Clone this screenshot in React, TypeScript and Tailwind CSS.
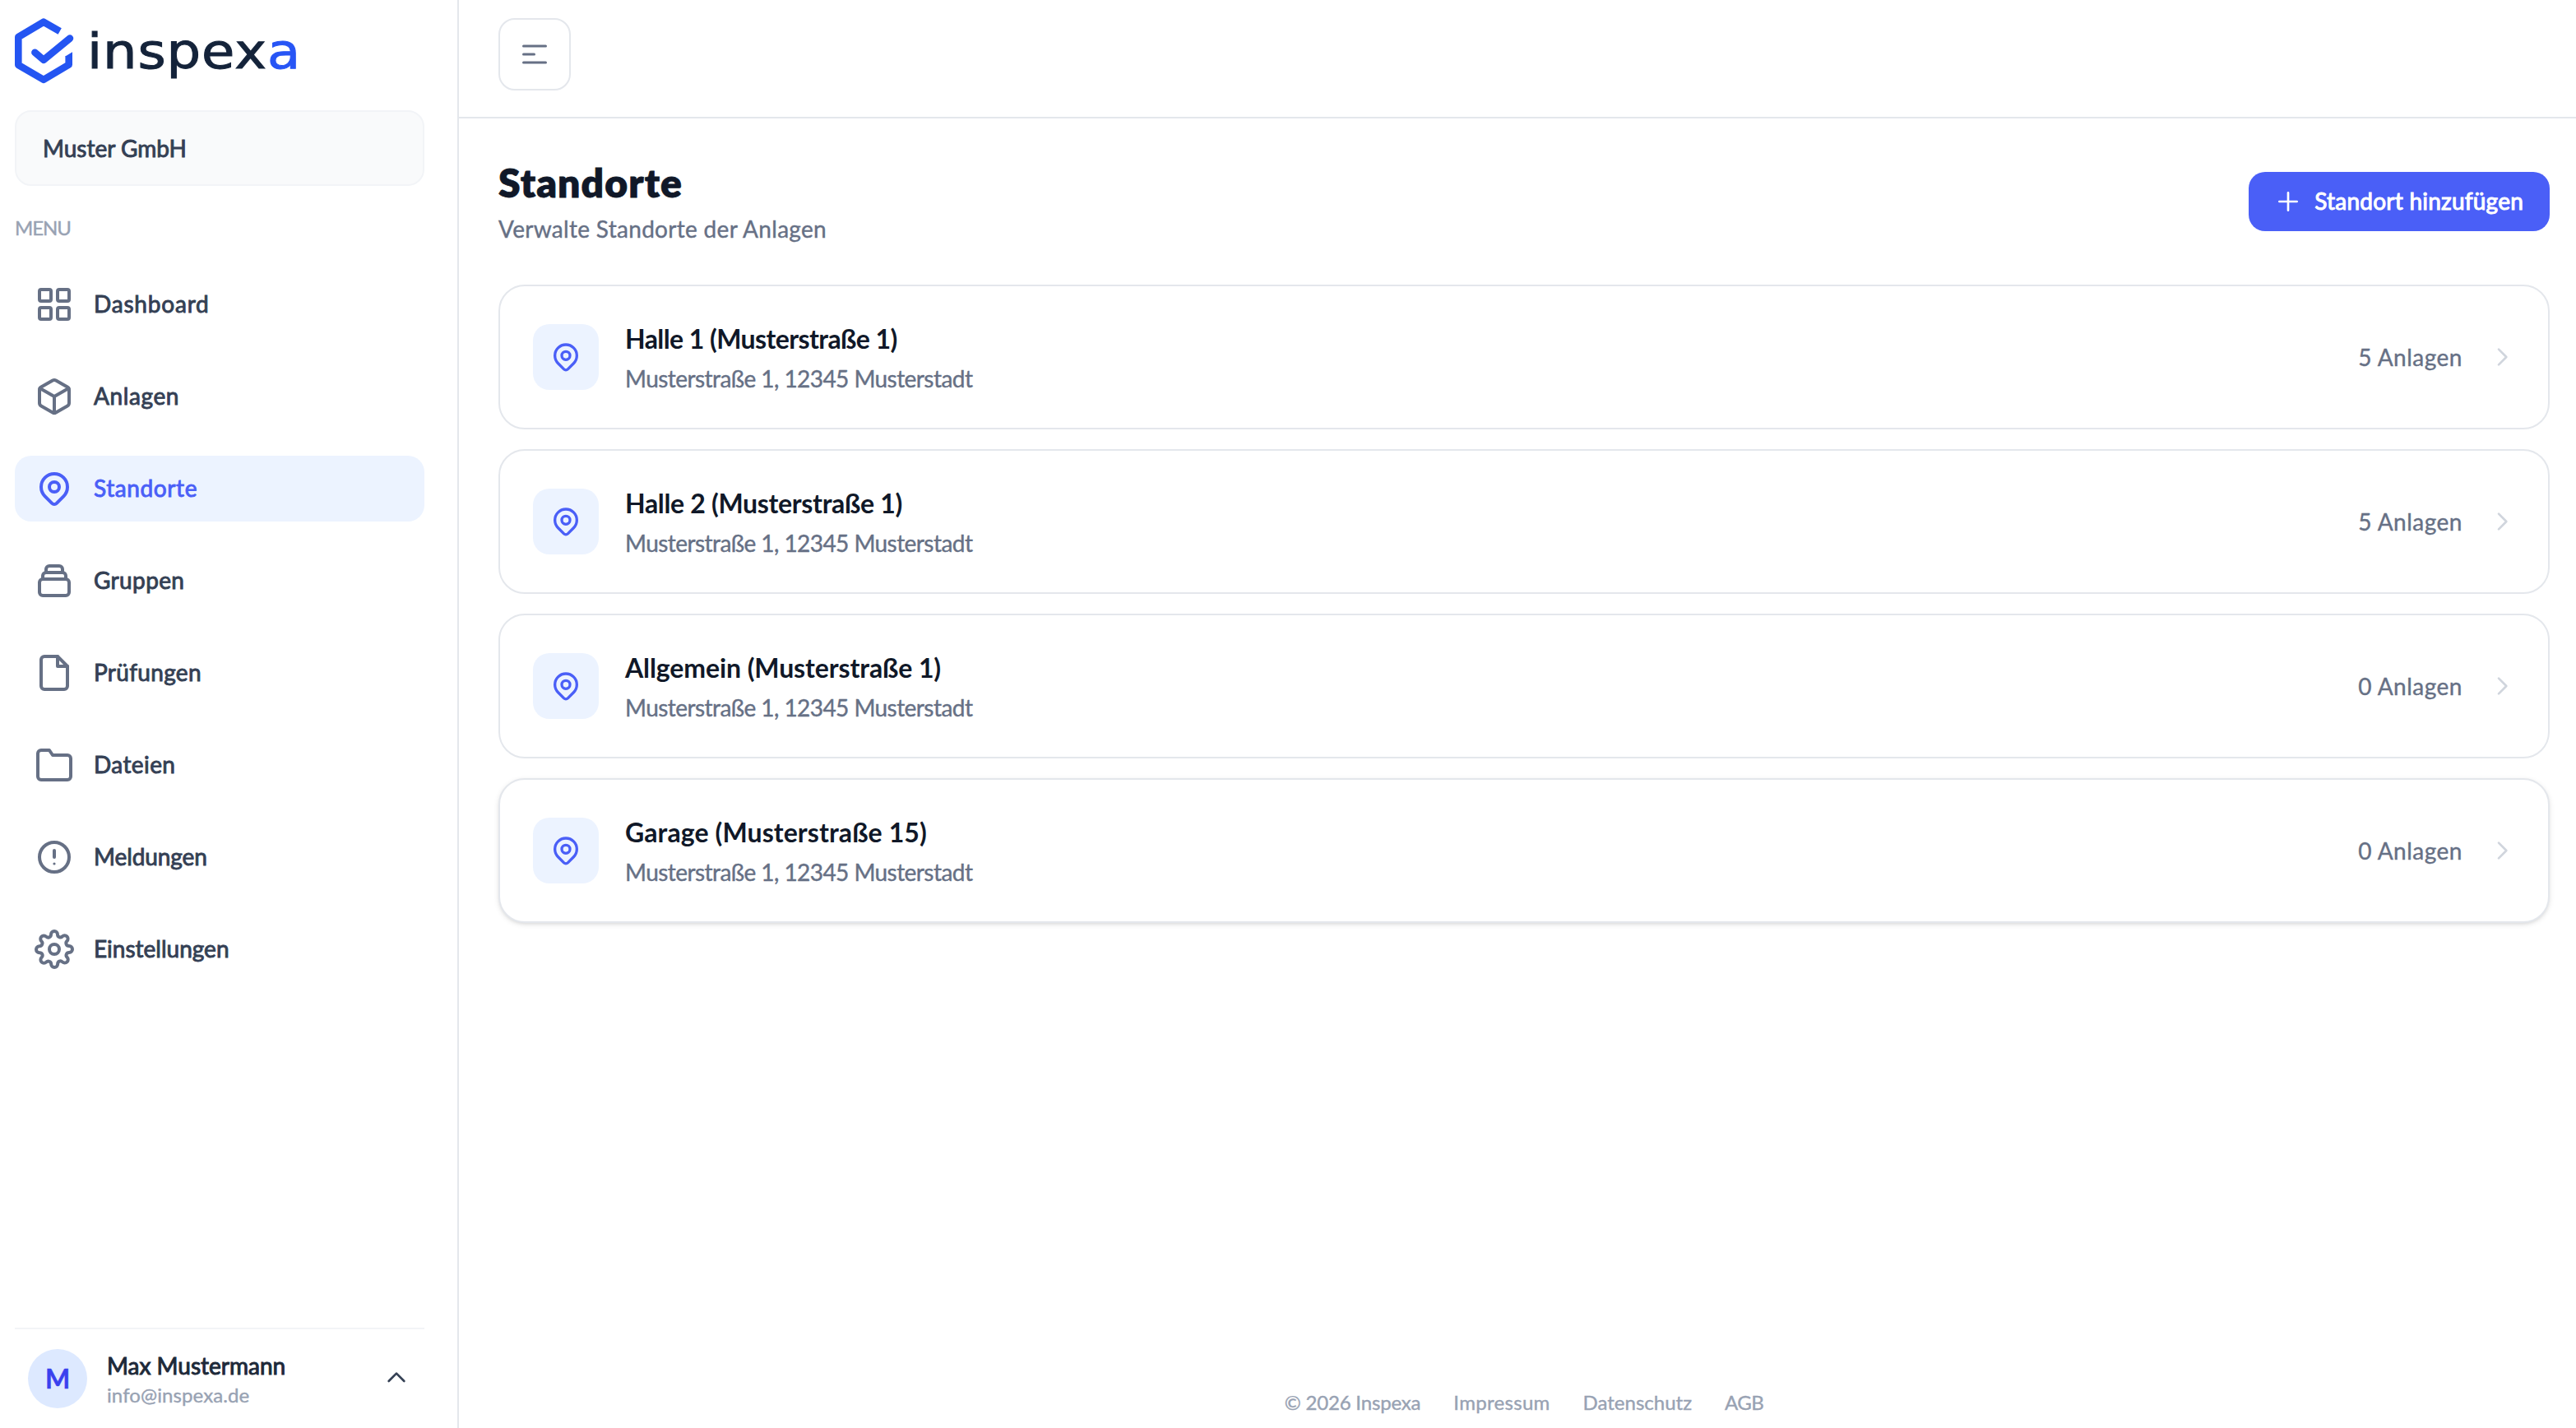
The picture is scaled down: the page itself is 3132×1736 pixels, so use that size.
import { ReactNode } from "react";
import { clsx } from "clsx";
import { FiBox, FiFolder, FiSettings } from "react-icons/fi";

const Icon = ({
  children,
  className,
}: {
  children: ReactNode;
  className?: string;
}) => (
  <svg
    viewBox="0 0 24 24"
    fill="none"
    stroke="currentColor"
    strokeWidth={2}
    strokeLinecap="round"
    strokeLinejoin="round"
    className={clsx("shrink-0", className)}
  >
    {children}
  </svg>
);

const GridIcon = () => (
  <Icon className="size-12">
    <rect x="3" y="3" width="7" height="7" rx="1" />
    <rect x="14" y="3" width="7" height="7" rx="1" />
    <rect x="14" y="14" width="7" height="7" rx="1" />
    <rect x="3" y="14" width="7" height="7" rx="1" />
  </Icon>
);

const PinIcon = ({ className }: { className: string }) => (
  <Icon className={className}>
    <path d="M17.657 16.657L13.414 20.9a1.998 1.998 0 01-2.827 0l-4.244-4.243a8 8 0 1111.314 0z" />
    <path d="M15 11a3 3 0 11-6 0 3 3 0 016 0z" />
  </Icon>
);

const CollectionIcon = () => (
  <Icon className="size-12">
    <path d="M19 11H5m14 0a2 2 0 012 2v6a2 2 0 01-2 2H5a2 2 0 01-2-2v-6a2 2 0 012-2m14 0V9a2 2 0 00-2-2M5 11V9a2 2 0 012-2m0 0V5a2 2 0 012-2h6a2 2 0 012 2v2M7 7h10" />
  </Icon>
);

const FileIcon = () => (
  <Icon className="size-12">
    <path d="M14 2H6a2 2 0 0 0-2 2v16a2 2 0 0 0 2 2h12a2 2 0 0 0 2-2V8z" />
    <path d="M14 2v6h6" />
  </Icon>
);

const AlertIcon = () => (
  <Icon className="size-12">
    <circle cx="12" cy="12" r="9" />
    <path d="M12 8v4" />
    <circle cx="12" cy="16" r="0.8" fill="currentColor" stroke="none" />
  </Icon>
);

const navItems = [
  { name: "Dashboard", icon: <GridIcon />, tracking: "tracking-[0.8px]" },
  {
    name: "Anlagen",
    icon: <FiBox className="size-12" />,
    tracking: "tracking-[0.6px]",
  },
  {
    name: "Standorte",
    icon: <PinIcon className="size-12" />,
    tracking: "tracking-[0.6px]",
    active: true,
  },
  { name: "Gruppen", icon: <CollectionIcon />, tracking: "tracking-[0.35px]" },
  { name: "Prüfungen", icon: <FileIcon />, tracking: "tracking-[0.3px]" },
  {
    name: "Dateien",
    icon: <FiFolder className="size-12" />,
    tracking: "tracking-[0.4px]",
  },
  { name: "Meldungen", icon: <AlertIcon />, tracking: "tracking-[-0.1px]" },
  {
    name: "Einstellungen",
    icon: <FiSettings className="size-12" />,
    tracking: "tracking-normal",
  },
];

const locations = [
  { name: "Halle 1 (Musterstraße 1)", count: 5, tracking: "tracking-[-0.58px]" },
  { name: "Halle 2 (Musterstraße 1)", count: 5, tracking: "tracking-[-0.32px]" },
  {
    name: "Allgemein (Musterstraße 1)",
    count: 0,
    tracking: "tracking-[-0.1px]",
  },
  {
    name: "Garage (Musterstraße 15)",
    count: 0,
    tracking: "tracking-[0.1px]",
    raised: true,
  },
];

const Logo = () => (
  <div className="flex h-20 items-center">
    <svg
      viewBox="0 0 70 80"
      fill="none"
      stroke="#2455f2"
      strokeLinejoin="round"
      className="h-20 w-[70px] shrink-0 overflow-visible"
    >
      <path
        d="M54.7 15.9L35 4.7L4.3 23V57L35 74.9L65.7 56.6V46"
        strokeWidth="8.6"
      />
      <path d="M61.4 46.4L70 41.2V46.4z" fill="#2455f2" stroke="none" />
      <path
        d="M24.4 41.8L35 50.8L67 24.6"
        strokeWidth="8.6"
        strokeLinecap="round"
      />
    </svg>
    <span className="ml-[18px] origin-left scale-x-[1.13] pt-0.5 font-['DejaVu_Sans',sans-serif] text-[58px] leading-none tracking-[0.8px] text-[#14233a] [-webkit-text-stroke:1px]">
      inspex<span className="text-[#2755f5]">a</span>
    </span>
  </div>
);

const Sidebar = () => (
  <aside className="flex w-[558px] shrink-0 flex-col border-r-2 border-[#e4e7ec] pt-[22px] pr-10 pb-6 pl-[18px]">
    <Logo />
    <div className="mt-8 flex h-[92px] items-center rounded-[20px] border-2 border-[#f2f4f7] bg-[#f9fafb] px-8 text-[28px] text-[#344054] [-webkit-text-stroke:0.9px]">
      Muster GmbH
    </div>
    <h2 className="mt-[31px] mb-[33px] text-2xl leading-10 tracking-[-1.1px] text-[#98a2b3] [-webkit-text-stroke:0.4px]">
      MENU
    </h2>
    <nav>
      <ul className="flex flex-col gap-8">
        {navItems.map((item) => (
          <li
            key={item.name}
            className={clsx(
              "flex h-20 items-center gap-6 rounded-[20px] px-6",
              item.active ? "bg-[#ecf3ff] text-[#4a5ff7]" : "text-[#667085]"
            )}
          >
            {item.icon}
            <span
              className={clsx(
                "pb-0.5 text-[28px] leading-10 [-webkit-text-stroke:0.9px]",
                item.tracking,
                !item.active && "text-[#344054]"
              )}
            >
              {item.name}
            </span>
          </li>
        ))}
      </ul>
    </nav>
    {/* account */}
    <div className="mt-auto flex items-center border-t-2 border-[#f2f4f7] pt-6 pr-[18px] pl-4">
      <div className="flex size-[72px] items-center justify-center rounded-full bg-[#dde9ff] text-[32px] font-bold text-[#3a41ee] [-webkit-text-stroke:0.5px]">
        M
      </div>
      <div className="ml-6 flex flex-col">
        <span className="text-[28px] leading-10 text-[#1d2939] [-webkit-text-stroke:1px]">
          Max Mustermann
        </span>
        <span className="text-2xl leading-8 tracking-[0.1px] text-[#98a2b3] [-webkit-text-stroke:0.4px]">
          info@inspexa.de
        </span>
      </div>
      <Icon className="mb-0.5 ml-auto size-8 text-[#344054]">
        <path d="M5 15l7-7 7 7" />
      </Icon>
    </div>
  </aside>
);

const LocationCard = ({ name, count, tracking, raised }: any) => (
  <li
    className={clsx(
      "flex h-44 items-center rounded-[32px] border-2 border-[#e4e7ec] bg-white px-10",
      raised && "shadow-[0_2px_6px_rgba(0,0,0,0.1),0_2px_4px_-2px_rgba(0,0,0,0.1)]"
    )}
  >
    <div className="flex size-20 items-center justify-center rounded-[20px] bg-[#ecf3ff] text-[#4a5ff7]">
      <PinIcon className="size-10" />
    </div>
    <div className="ml-8 flex flex-col gap-1">
      <h3
        className={clsx("text-[32px] leading-12 font-bold text-[#101828]", tracking)}
      >
        {name}
      </h3>
      <p className="text-[28px] leading-10 tracking-[-0.56px] text-[#667085] [-webkit-text-stroke:0.4px]">
        Musterstraße 1, 12345 Musterstadt
      </p>
    </div>
    <span className="ml-auto text-[28px] leading-10 tracking-[0.5px] text-[#667085] [-webkit-text-stroke:0.4px]">
      {count} Anlagen
    </span>
    <Icon className="ml-8 size-8 text-[#d0d5dd]">
      <path d="M9 5l7 7-7 7" />
    </Icon>
  </li>
);

const Header = () => (
  <header className="h-36 shrink-0 border-b-2 border-[#e4e7ec] pt-[22px] pl-12">
    <button className="flex size-[88px] items-center justify-center rounded-[20px] border-2 border-[#e4e7ec] text-[#667085]">
      <svg
        viewBox="0 0 32 24"
        fill="none"
        stroke="currentColor"
        strokeWidth={3}
        strokeLinecap="round"
        className="h-6 w-8"
      >
        <path d="M2.5 2h27M2.5 12h13M2.5 22h27" />
      </svg>
    </button>
  </header>
);

export default function App() {
  return (
    <div className="flex h-screen w-full bg-white font-['Lato',sans-serif]">
      <Sidebar />
      <div className="flex flex-1 flex-col">
        <Header />
        <main className="flex flex-1 flex-col pt-[46px] pr-8 pb-[15px] pl-12">
          <div className="flex items-center justify-between">
            <div className="flex flex-col gap-1">
              <h1 className="text-5xl leading-16 font-extrabold tracking-[1.1px] text-[#101828] [-webkit-text-stroke:0.8px]">
                Standorte
              </h1>
              <p className="text-[28px] leading-10 tracking-[0.3px] text-[#667085] [-webkit-text-stroke:0.4px]">
                Verwalte Standorte der Anlagen
              </p>
            </div>
            <button className="mt-0.5 flex h-[72px] items-center gap-4 rounded-[20px] bg-[#4a5ff7] px-8 text-[28px] tracking-[0.22px] text-white">
              <Icon className="size-8">
                <path d="M12 4v16m8-8H4" />
              </Icon>
              <span className="pb-0.5 [-webkit-text-stroke:1px]">
                Standort hinzufügen
              </span>
            </button>
          </div>
          <ul className="mt-12 flex flex-col gap-6">
            {locations.map((location) => (
              <LocationCard key={location.name} {...location} />
            ))}
          </ul>
          <footer className="mt-auto flex justify-center gap-10 text-2xl leading-8 text-[#98a2b3] [-webkit-text-stroke:0.4px]">
            <span className="tracking-[-0.17px]">© 2026 Inspexa</span>
            <span className="tracking-[0.3px]">Impressum</span>
            <span>Datenschutz</span>
            <span className="tracking-[-0.5px]">AGB</span>
          </footer>
        </main>
      </div>
    </div>
  );
}
